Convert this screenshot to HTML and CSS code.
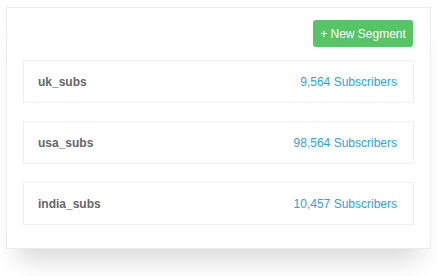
FILE: index.html
```html
<!DOCTYPE html>
<html>
<head>
<meta charset="utf-8">
<link rel="stylesheet" href="styles.css">
</head>
<body>
<div class="card">
  <div class="toolbar">
    <button class="btn-new">+ New Segment</button>
  </div>
  <div class="list">
    <div class="row"><span class="name">uk_subs</span><span class="count">9,564 Subscribers</span></div>
    <div class="row"><span class="name">usa_subs</span><span class="count">98,564 Subscribers</span></div>
    <div class="row"><span class="name">india_subs</span><span class="count">10,457 Subscribers</span></div>
  </div>
</div>
</body>
</html>
```
FILE: styles.css
```css
html, body {
  margin: 0;
  padding: 0;
  background: #fff;
  font-family: "Liberation Sans", Arial, sans-serif;
}
body {
  min-height: 276px;
  padding-top: 7px;
  box-sizing: border-box;
}
.card {
  box-sizing: border-box;
  margin: 0 0 0 6px;
  width: 425px;
  height: 242px;
  border: 1px solid #ececec;
  background: #fff;
  padding: 12px 16px 0 16px;
  box-shadow: 0 22px 24px -12px rgba(0,0,0,0.16);
}
.toolbar {
  display: flex;
  justify-content: flex-end;
  padding-right: 1px;
}
.btn-new {
  height: 27px;
  width: 100px;
  border: none;
  border-radius: 3px;
  background: #55c566;
  color: #fff;
  font-family: inherit;
  font-size: 12px;
  padding: 0;
}
.list {
  margin-top: 13px;
  display: flex;
  flex-direction: column;
  gap: 18px;
}
.row {
  box-sizing: border-box;
  height: 43px;
  border: 1px solid #efefef;
  display: flex;
  align-items: center;
  justify-content: space-between;
  padding: 0 16px 0 14px;
  font-size: 12px;
}
.name {
  font-weight: bold;
  color: #666;
}
.count {
  color: #2ea3d5;
}
```
